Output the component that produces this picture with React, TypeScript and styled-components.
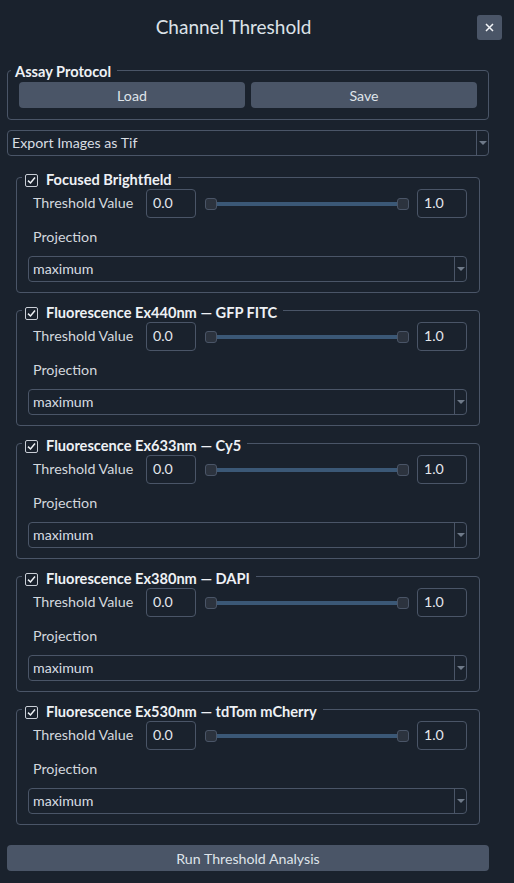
import React from "react";
import styled, { createGlobalStyle } from "styled-components";

const Global = createGlobalStyle`
  html, body { margin: 0; padding: 0; background: #1a222d; }
  body { font-family: Lato, "Open Sans", sans-serif; color: #d6dbe1; }
  * { box-sizing: border-box; }
`;

const Page = styled.div`
  width: 514px;
  min-height: 883px;
  padding: 0 25px 12px 7px;
  background: #1a222d;
  display: flex;
  flex-direction: column;
`;

const Header = styled.div`
  display: flex;
  align-items: flex-start;
  height: 60px;
  margin: 0 -25px 0 -7px;
`;

const Title = styled.div`
  flex: 1;
  text-align: center;
  font-size: 19px;
  line-height: 24px;
  padding-top: 15px;
  color: #dde2e8;
`;

const CloseButton = styled.button`
  width: 25px;
  height: 25px;
  margin: 15px 12px 0 10px;
  border: none;
  border-radius: 3px;
  background: #4a5567;
  color: #eef1f4;
  padding: 0;
  display: flex;
  align-items: center;
  justify-content: center;
`;

const Group = styled.fieldset<{ $inset?: boolean }>`
  margin: ${(p) => (p.$inset ? "0 9px" : "0")};
  padding: ${(p) => (p.$inset ? "1px 12px 10px 11px" : "2px 11px 11px 11px")};
  border: 1px solid #4a5567;
  border-radius: 4px;
  min-width: 0;
`;

const Legend = styled.legend<{ $inset?: boolean }>`
  margin-left: ${(p) => (p.$inset ? "-6px" : "-8px")};
  padding: ${(p) => (p.$inset ? "6px 6px 0 3px" : "4px 6px 0 4px")};
  display: flex;
  align-items: center;
  height: ${(p) => (p.$inset ? "22px" : "20px")};
  gap: 8px;
  font-weight: 700;
  font-size: 14.6px;
  line-height: 16px;
  color: #eef1f5;
`;

const ButtonRow = styled.div`
  display: flex;
  gap: 6px;
`;

const Button = styled.button<{ $wide?: boolean }>`
  flex: ${(p) => (p.$wide ? "none" : "1")};
  height: 26px;
  border: none;
  border-radius: 4px;
  background: #4a5567;
  color: #dfe4ea;
  font-family: inherit;
  font-size: 14.2px;
  padding: 0;
  margin-top: ${(p) => (p.$wide ? "20px" : "0")};
  width: 100%;
`;

const SelectBox = styled.div<{ $top?: number }>`
  display: flex;
  height: 26px;
  border: 1px solid #4a5567;
  border-radius: 4px;
  margin-top: ${(p) => p.$top ?? 0}px;
`;

const SelectText = styled.div`
  flex: 1;
  padding-left: 4px;
  font-size: 14.2px;
  line-height: 24px;
  color: #d8dde3;
`;

const SelectArrow = styled.div`
  width: 12px;
  border-left: 1px solid #4a5567;
  display: flex;
  align-items: center;
  justify-content: center;
  &::after {
    content: "";
    border-left: 4px solid transparent;
    border-right: 4px solid transparent;
    border-top: 4px solid #6f7a89;
  }
`;

const Checkbox = styled.span`
  width: 13px;
  height: 13px;
  border: 1px solid #c9ced6;
  border-radius: 2px;
  display: flex;
  align-items: center;
  justify-content: center;
  flex: none;
`;

const Channel = styled(Group)<{ $first?: boolean }>`
  margin-top: ${(p) => (p.$first ? "10px" : "6px")};
`;

const Row = styled.div`
  display: flex;
  align-items: center;
  height: 29px;
`;

const Label = styled.div<{ $width?: number }>`
  width: ${(p) => (p.$width ? `${p.$width}px` : "auto")};
  padding: 0 0 2px 5px;
  font-size: 14.3px;
  color: #d3d8de;
  flex: none;
`;

const NumberInput = styled.div`
  width: 50px;
  height: 29px;
  border: 1px solid #4a5567;
  border-radius: 4px;
  padding-left: 6px;
  font-size: 14.2px;
  line-height: 26px;
  color: #e3e7ec;
  flex: none;
`;

const Slider = styled.div`
  flex: 1;
  display: flex;
  align-items: center;
  margin: 0 8px 0 9px;
`;

const Handle = styled.div`
  width: 12px;
  height: 12px;
  border-radius: 3px;
  background: #2c333e;
  border: 1px solid #4a5567;
  flex: none;
`;

const Track = styled.div`
  flex: 1;
  height: 4px;
  background: #3b5876;
`;

const ProjectionLine = styled.div`
  height: 38px;
  display: flex;
  align-items: center;
`;

const channels = [
  "Focused Brightfield",
  "Fluorescence Ex440nm — GFP FITC",
  "Fluorescence Ex633nm — Cy5",
  "Fluorescence Ex380nm — DAPI",
  "Fluorescence Ex530nm — tdTom mCherry",
];

const Check = () => (
  <svg width="9" height="9" viewBox="0 0 9 9">
    <path d="M1 4.6 L3.5 7 L8 1.6" fill="none" stroke="#eef1f5" strokeWidth="1.5" />
  </svg>
);

export default function App() {
  return (
    <>
      <Global />
      <Page>
        <Header>
          <Title>Channel Threshold</Title>
          <CloseButton aria-label="close">
            <svg width="9" height="9" viewBox="0 0 9 9">
              <path d="M1 1 L8 8 M8 1 L1 8" stroke="#f2f4f7" strokeWidth="1.5" />
            </svg>
          </CloseButton>
        </Header>
        <Group>
          <Legend>Assay Protocol</Legend>
          <ButtonRow>
            <Button>Load</Button>
            <Button>Save</Button>
          </ButtonRow>
        </Group>
        <SelectBox $top={10}>
          <SelectText>Export Images as Tif</SelectText>
          <SelectArrow />
        </SelectBox>
        {channels.map((name, i) => (
          <Channel key={name} $inset $first={i === 0}>
            <Legend $inset>
              <Checkbox>
                <Check />
              </Checkbox>
              {name}
            </Legend>
            <Row>
              <Label $width={118}>Threshold Value</Label>
              <NumberInput>0.0</NumberInput>
              <Slider>
                <Handle />
                <Track />
                <Handle />
              </Slider>
              <NumberInput>1.0</NumberInput>
            </Row>
            <ProjectionLine>
              <Label>Projection</Label>
            </ProjectionLine>
            <SelectBox>
              <SelectText>maximum</SelectText>
              <SelectArrow />
            </SelectBox>
          </Channel>
        ))}
        <Button $wide>Run Threshold Analysis</Button>
      </Page>
    </>
  );
}
